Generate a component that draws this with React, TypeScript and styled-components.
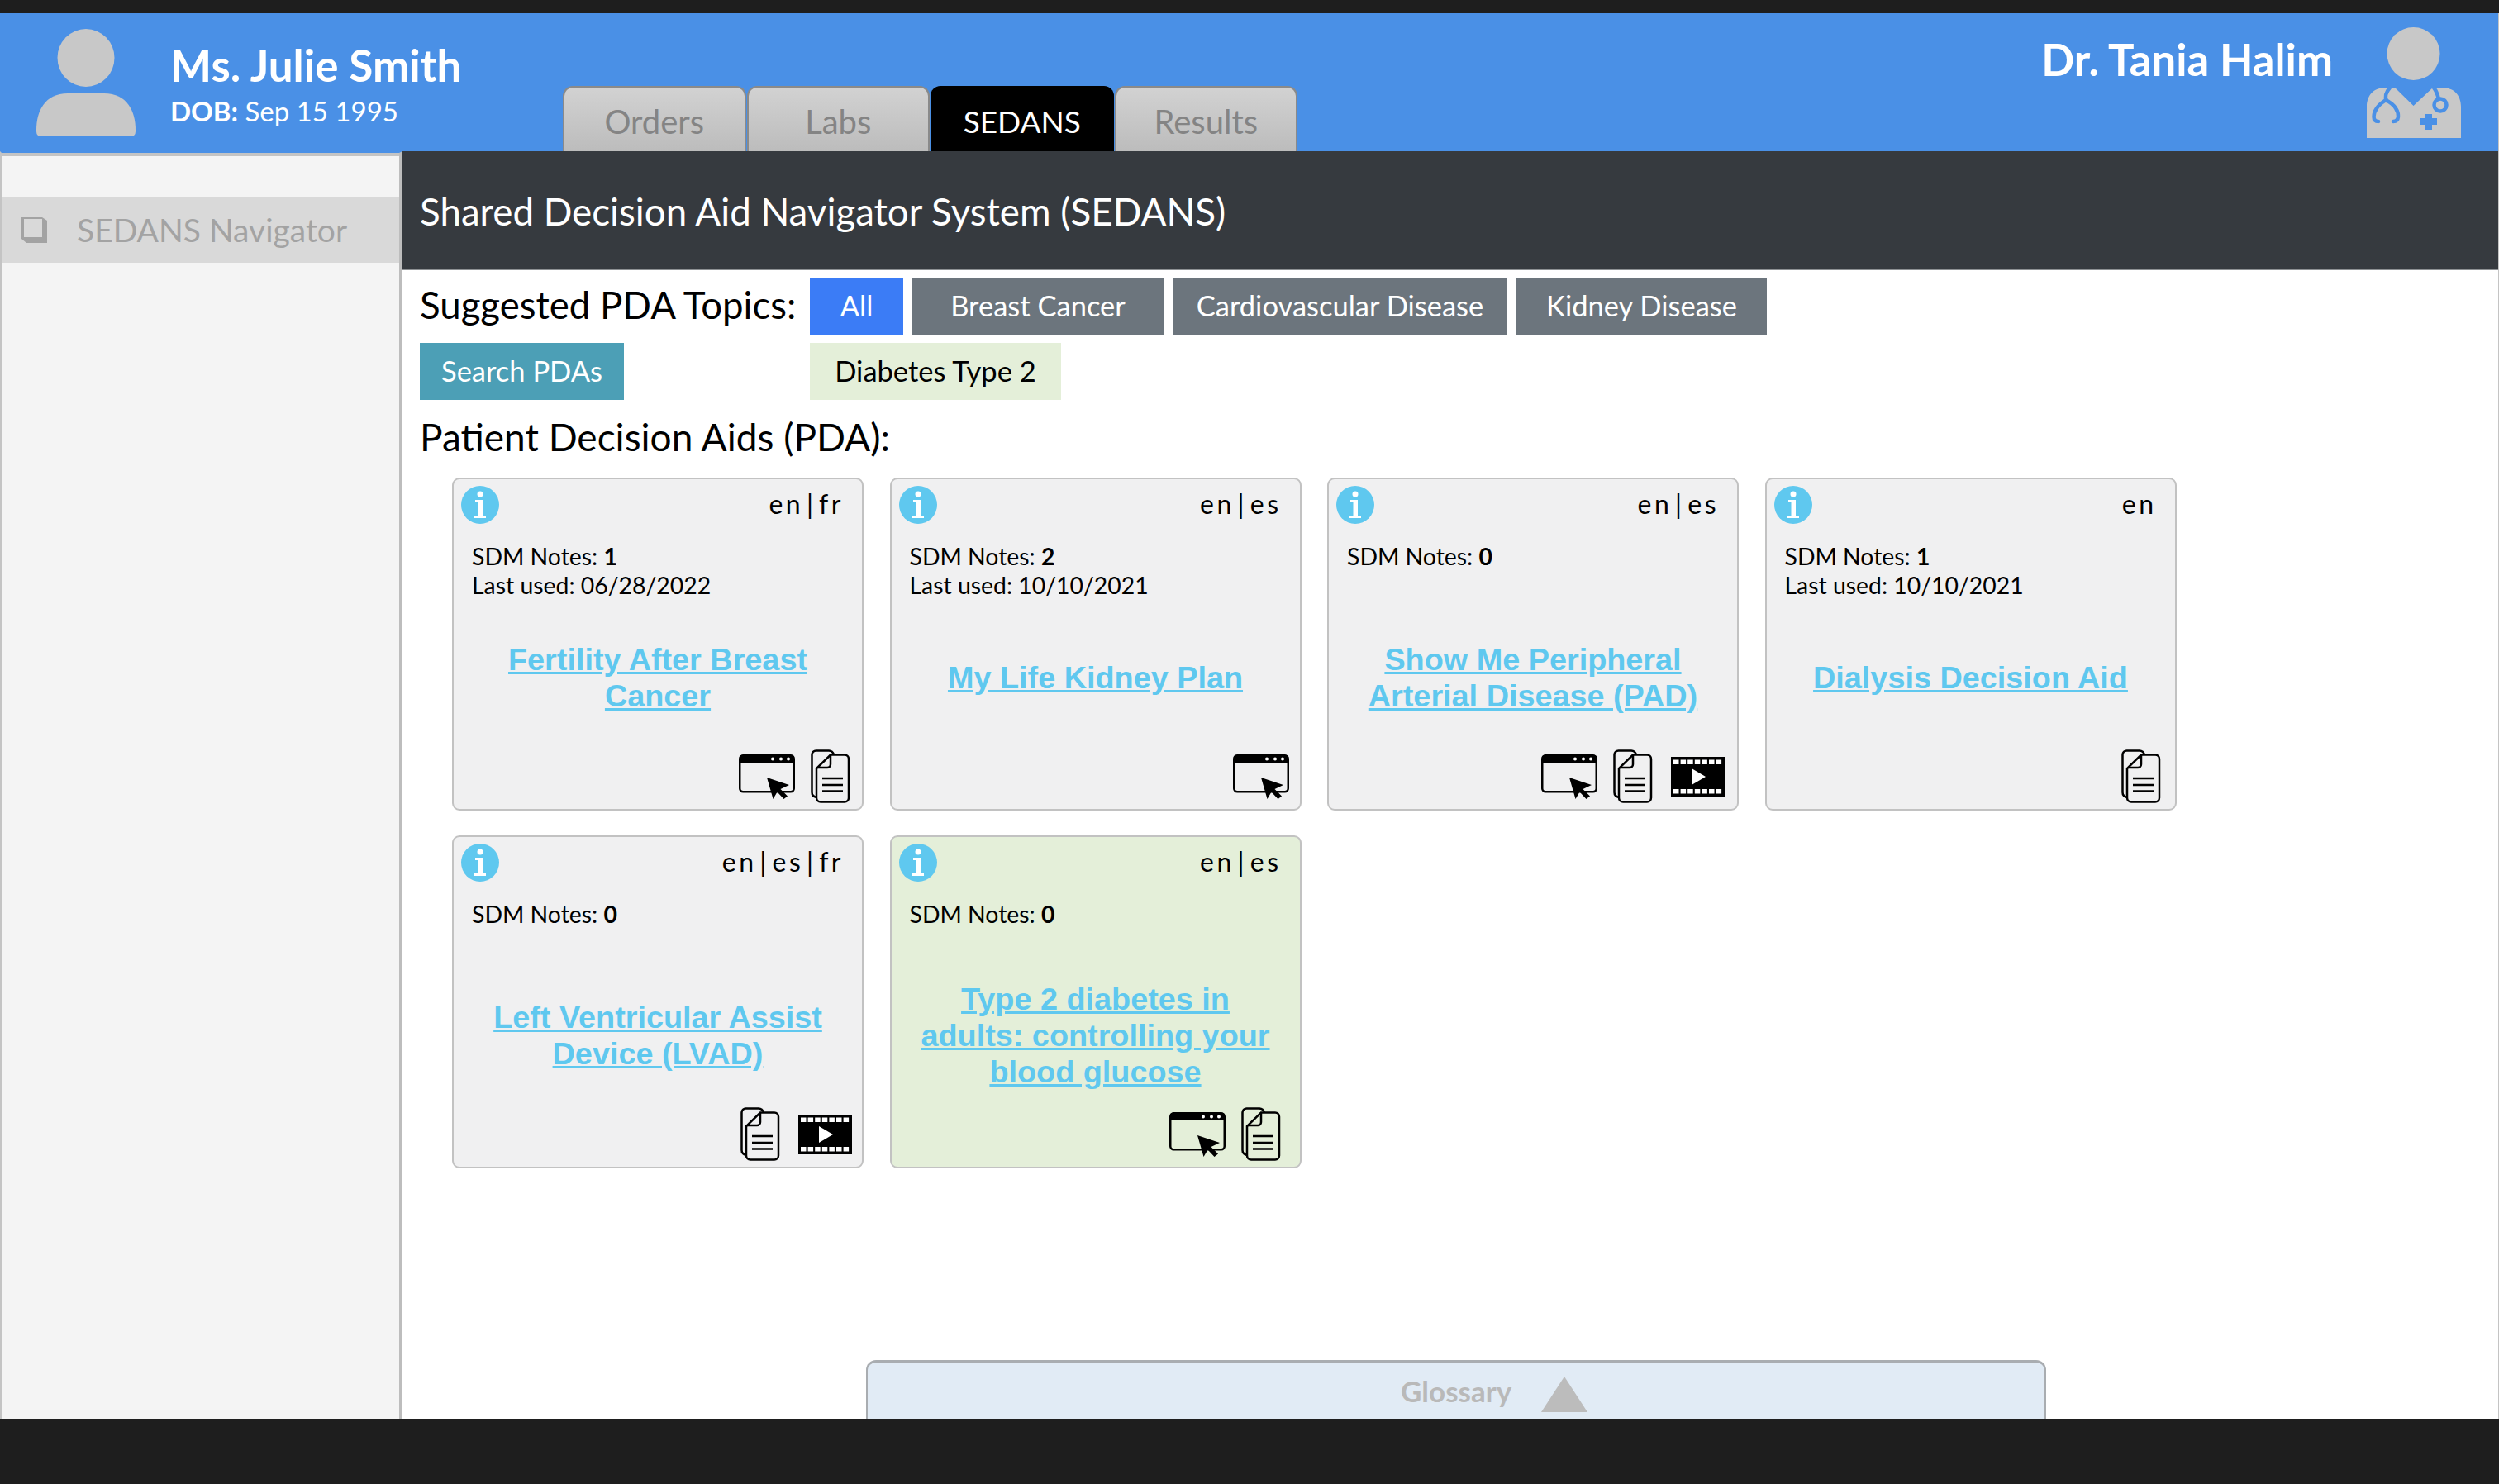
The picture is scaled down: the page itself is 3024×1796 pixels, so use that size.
import * as React from "react"
import styled, { createGlobalStyle } from "styled-components"

const GlobalStyle = createGlobalStyle`
  html, body {
    margin: 0;
    padding: 0;
    background: #1e1e1e;
    font-family: Lato, "Open Sans", sans-serif;
  }
  * { box-sizing: border-box; }
`

type Media = "web" | "doc" | "film"

interface Pda {
  title: string
  langs: string
  notes: number
  lastUsed?: string
  media: Media[]
  inset: number
  green?: boolean
}

const pdas: Pda[] = [
  { title: "Fertility After Breast Cancer", langs: "en | fr", notes: 1, lastUsed: "06/28/2022", media: ["web", "doc"], inset: 14 },
  { title: "My Life Kidney Plan", langs: "en | es", notes: 2, lastUsed: "10/10/2021", media: ["web"], inset: 13 },
  { title: "Show Me Peripheral Arterial Disease (PAD)", langs: "en | es", notes: 0, media: ["web", "doc", "film"], inset: 15 },
  { title: "Dialysis Decision Aid", langs: "en", notes: 1, lastUsed: "10/10/2021", media: ["doc"], inset: 17 },
  { title: "Left Ventricular Assist Device (LVAD)", langs: "en | es | fr", notes: 0, media: ["doc", "film"], inset: 12 },
  { title: "Type 2 diabetes in adults: controlling your blood glucose", langs: "en | es", notes: 0, media: ["web", "doc"], inset: 23, green: true },
]

const topics = [
  { name: "Breast Cancer", width: 304 },
  { name: "Cardiovascular Disease", width: 405 },
  { name: "Kidney Disease", width: 303 },
]

const PatientAvatar = () => (
  <svg width="120" height="130" viewBox="0 0 120 130" fill="#c8c8c8">
    <ellipse cx="60" cy="35" rx="34.500" ry="35" />
    <path d="M0 122 C0 100 10 78 38 78 H82 C110 78 120 100 120 122 V124 Q120 130 114 130 H6 Q0 130 0 124 Z" />
  </svg>
)

const DoctorAvatar = () => (
  <svg width="114" height="134" viewBox="0 0 114 134">
    <ellipse cx="56.500" cy="32" rx="32" ry="32" fill="#c8c8c8" />
    <path
      d="M0 134 V96 C0 82 9 73 22 73 H34 L56.500 95 L80 73 H92 C105 73 114 82 114 96 V134 Z"
      fill="#c8c8c8"
    />
    <g fill="none" stroke="#4a90e6" strokeWidth="4.500" strokeLinecap="round">
      <path d="M28 73 C22 80 22 85 24 89" />
      <path d="M14 114 C6 114 8 104 12 98 C15 93 20 90 23 88 C27 90 32 93 35 98 C39 104 40 114 32 114" />
      <path d="M81 73 C85 78 86 82 87 87" />
      <circle cx="89" cy="94" r="7.500" />
    </g>
    <path d="M70 105 H79 V110 H85 V118 H79 V124 H70 V118 H64 V110 H70 Z" fill="#4a90e6" />
  </svg>
)

const NavIcon = () => (
  <svg width="34" height="34" viewBox="0 0 34 34">
    <path d="M2 2 H27 L33 6 V33 H8 L2 28 Z" fill="#a3a3a3" />
    <rect x="5" y="4" width="22" height="22" fill="#d9d9d9" />
  </svg>
)

const InfoIcon = () => (
  <svg width="46" height="46" viewBox="0 0 46 46">
    <circle cx="23" cy="23" r="23" fill="#5fc8ef" />
    <circle cx="23" cy="10" r="3.500" fill="#fff" />
    <path d="M17 17 H26 V36 H30 V39 H16 V36 H20.500 V20 H17 Z" fill="#fff" />
  </svg>
)

const WebIcon = () => (
  <svg width="68" height="54" viewBox="0 0 68 54">
    <rect x="1.250" y="1.250" width="65.500" height="44" rx="4" fill="none" stroke="#000" strokeWidth="2.500" />
    <path d="M1 10 V5 Q1 0.500 5 0.500 H63 Q67 0.500 67 5 V10 Z" fill="#000" />
    <circle cx="41" cy="5.500" r="2" fill="#fff" />
    <circle cx="51" cy="5.500" r="2" fill="#fff" />
    <circle cx="60" cy="5.500" r="2" fill="#fff" />
    <path d="M34 28 L61 37 L50.500 42 L59 50.500 L54.500 54 L46.500 45.500 L41.500 54 Z" fill="#000" />
  </svg>
)

const DocIcon = () => (
  <svg width="48" height="65" viewBox="0 0 48 65" fill="none" stroke="#000" strokeWidth="2.500">
    <path d="M7 58 C3 57 1.500 55 1.500 52 V6.500 A5 5 0 0 1 6.500 1.500 H22 A7 7 0 0 1 28 6" />
    <path d="M24 6.500 H41 A5 5 0 0 1 46 11.500 V58.500 A5 5 0 0 1 41 63.500 H12 A5 5 0 0 1 7 58.500 V23 Z" />
    <path d="M24 6.500 V18 A4 4 0 0 1 20 22 H8" />
    <path d="M14 35 H39 M14 43 H39 M14 50.500 H39" />
  </svg>
)

const FilmIcon = () => (
  <FilmSvg width="65" height="48" viewBox="0 0 65 48">
    <rect width="65" height="48" fill="#000" />
    {[0, 1, 2, 3, 4, 5, 6].map((i) => (
      <React.Fragment key={i}>
        <rect x={3 + i * 8.6} y="3.500" width="6.500" height="5.500" fill="#fff" />
        <rect x={3 + i * 8.6} y="39" width="6.500" height="5.500" fill="#fff" />
      </React.Fragment>
    ))}
    <path d="M25 14 L42 24 L25 34 Z" fill="#fff" />
  </FilmSvg>
)

const mediaIcons = { web: WebIcon, doc: DocIcon, film: FilmIcon }

const App = () => (
  <Screen>
    <GlobalStyle />
    <Frame>
      <Header>
        <PatientAvatar />
        <PatientInfo>
          <PatientName>Ms. Julie Smith</PatientName>
          <Dob>
            <b>DOB:</b> Sep 15 1995
          </Dob>
        </PatientInfo>
        <Tabs>
          <Tab>Orders</Tab>
          <Tab>Labs</Tab>
          <Tab $active>SEDANS</Tab>
          <Tab>Results</Tab>
        </Tabs>
        <Doctor>
          <DoctorName>Dr. Tania Halim</DoctorName>
          <DoctorAvatar />
        </Doctor>
      </Header>

      <Body>
        <Sidebar>
          <NavItem>
            <NavIcon />
            SEDANS Navigator
          </NavItem>
        </Sidebar>

        <Content>
          <TitleBar>Shared Decision Aid Navigator System (SEDANS)</TitleBar>

          <TopicGrid>
            <TopicsHeading>Suggested PDA Topics:</TopicsHeading>
            <TopicRow>
              <Chip $bg="#3b7cf6" $width={113}>All</Chip>
              {topics.map((t) => (
                <Chip key={t.name} $bg="#6c757d" $width={t.width}>{t.name}</Chip>
              ))}
            </TopicRow>
            <SearchButton>Search PDAs</SearchButton>
            <TopicRow>
              <Chip $bg="#e4efd9" $color="#000" $width={304}>Diabetes Type 2</Chip>
            </TopicRow>
          </TopicGrid>

          <SectionHeading>Patient Decision Aids (PDA):</SectionHeading>

          <CardGrid>
            {pdas.map((p) => (
              <Card key={p.title} $green={p.green}>
                <CardTop>
                  <InfoIcon />
                  <Langs>{p.langs}</Langs>
                </CardTop>
                <Notes>
                  SDM Notes: <b>{p.notes}</b>
                  {p.lastUsed && (
                    <>
                      <br />
                      Last used: {p.lastUsed}
                    </>
                  )}
                </Notes>
                <CardTitle>
                  <a href="#">{p.title}</a>
                </CardTitle>
                <MediaRow $inset={p.inset}>
                  {p.media.map((m) => {
                    const Icon = mediaIcons[m]
                    return <Icon key={m} />
                  })}
                </MediaRow>
              </Card>
            ))}
          </CardGrid>

          <Glossary>
            <GlossaryLabel>Glossary</GlossaryLabel>
            <GlossaryArrow />
          </Glossary>
        </Content>
      </Body>
    </Frame>
  </Screen>
)

export default App

// Styles
const FilmSvg = styled.svg`
  margin-left: 3px;
`

const Screen = styled.div`
  width: 3024px;
  height: 1796px;
  padding: 16px 0 79px;
  background: #1e1e1e;
  overflow: hidden;
`

const Frame = styled.div`
  height: 100%;
  display: flex;
  flex-direction: column;
  background: #fff;
  border-right: 1px solid #c4c4c4;
  overflow: hidden;
`

const Header = styled.header`
  height: 167px;
  flex: none;
  display: flex;
  background: #4a90e6;
  padding: 19px 45px 0 44px;
`

const PatientInfo = styled.div`
  width: 475px;
  margin-left: 42px;
  padding-top: 14px;
  color: #fff;
`

const PatientName = styled.div`
  font-size: 53px;
  font-weight: 700;
  line-height: 60px;
`

const Dob = styled.div`
  font-size: 33px;
  line-height: 44px;
  margin-top: 3px;
`

const Tabs = styled.nav`
  display: flex;
  gap: 1px;
  align-self: flex-end;
`

const Tab = styled.div<{ $active?: boolean }>`
  width: 221.500px;
  height: 79px;
  display: flex;
  align-items: center;
  justify-content: center;
  padding-top: 4px;
  font-size: ${(p) => (p.$active ? "37px" : "40px")};
  border: 2px solid ${(p) => (p.$active ? "#000" : "#8a8a8a")};
  border-bottom: none;
  border-radius: 12px 12px 0 0;
  color: ${(p) => (p.$active ? "#fff" : "#848484")};
  background: ${(p) =>
    p.$active ? "#000" : "linear-gradient(#d2d2d2, #bcbcbc)"};
`

const Doctor = styled.div`
  margin-left: auto;
  display: flex;
  align-items: flex-start;
  gap: 41px;
  margin-top: -2px;
`

const DoctorName = styled.div`
  font-size: 52.600px;
  font-weight: 700;
  line-height: 60px;
  color: #fff;
  padding-top: 9px;
`

const Body = styled.div`
  flex: 1;
  min-height: 0;
  display: flex;
`

const Sidebar = styled.aside`
  width: 487px;
  flex: none;
  padding-top: 53px;
  background: #f4f4f4;
  border-left: 2px solid #c4c4c4;
  border-right: 4px solid #bdbdbd;
  border-top: 2px solid #4a90e6;
  box-shadow: inset 0 4px 0 #c4c4c4;
`

const NavItem = styled.div`
  height: 80px;
  display: flex;
  align-items: center;
  gap: 35px;
  padding-left: 22px;
  background: #d9d9d9;
  color: #a3a3a3;
  font-size: 39px;
`

const Content = styled.main`
  flex: 1;
  min-width: 0;
  display: flex;
  flex-direction: column;
`

const TitleBar = styled.div`
  height: 144px;
  flex: none;
  display: flex;
  align-items: center;
  padding: 2px 0 0 21px;
  background: #363a3f;
  border-bottom: 2px solid #8d9093;
  color: #fff;
  font-size: 45.700px;
`

const TopicGrid = styled.div`
  display: grid;
  grid-template-columns: 472px 1fr;
  row-gap: 10px;
  padding: 9px 0 0 21px;
`

const Heading = styled.div`
  font-size: 46px;
  line-height: 69px;
  color: #000;
`

const TopicsHeading = styled(Heading)`
  font-size: 45.600px;
  line-height: 65px;
`

const TopicRow = styled.div`
  display: flex;
  gap: 11px;
`

const Chip = styled.div<{ $bg: string; $color?: string; $width: number }>`
  height: 69px;
  width: ${(p) => p.$width}px;
  display: flex;
  align-items: center;
  justify-content: center;
  padding-bottom: 2px;
  white-space: nowrap;
  background: ${(p) => p.$bg};
  color: ${(p) => p.$color ?? "#fff"};
  font-size: 34.500px;
`

const SearchButton = styled.div`
  width: 247px;
  height: 69px;
  display: flex;
  align-items: center;
  justify-content: center;
  padding-bottom: 2px;
  background: #4c9fb6;
  color: #fff;
  font-size: 34.500px;
`

const SectionHeading = styled(Heading)`
  padding: 10px 0 0 21px;
`

const CardGrid = styled.div`
  display: grid;
  grid-template-columns: repeat(4, 498px);
  gap: 30px 31.500px;
  padding: 15px 0 0 60px;
`

const Card = styled.article<{ $green?: boolean }>`
  height: 403px;
  display: flex;
  flex-direction: column;
  border: 2px solid #c2c2c2;
  border-radius: 9px;
  background: ${(p) => (p.$green ? "#e4efd9" : "#f0f0f1")};
  color: #000;
`

const CardTop = styled.div`
  height: 60px;
  flex: none;
  display: flex;
  justify-content: space-between;
  padding: 8px 22px 0 9px;
`

const Langs = styled.div`
  font-size: 32px;
  line-height: 44px;
  letter-spacing: 3.500px;
  word-spacing: -8px;
`

const Notes = styled.div`
  height: 97px;
  flex: none;
  padding: 16px 0 0 22px;
  font-size: 28.400px;
  line-height: 35px;
`

const CardTitle = styled.div`
  height: 165px;
  flex: none;
  display: flex;
  align-items: center;
  justify-content: center;
  padding: 0 26px;
  text-align: center;
  font-family: "Liberation Sans", Arial, sans-serif;
  font-weight: 700;
  font-size: 37.800px;
  line-height: 44px;

  a {
    color: #5fc8ef;
  }
`

const MediaRow = styled.div<{ $inset: number }>`
  flex: 1;
  display: flex;
  align-items: center;
  justify-content: flex-end;
  gap: 19px;
  padding: 0 ${(p) => p.$inset}px 2px 0;
`

const Glossary = styled.div`
  margin: auto 0 0 561px;
  width: 1428px;
  height: 71px;
  flex: none;
  display: flex;
  align-items: flex-start;
  gap: 36px;
  padding: 17px 0 0 645px;
  background: #e1ebf5;
  border: 2px solid #a9adb1;
  border-top-width: 3px;
  border-bottom: none;
  border-radius: 12px 12px 0 0;
`

const GlossaryLabel = styled.div`
  font-size: 35px;
  line-height: 34px;
  font-weight: 700;
  color: #b9b9b9;
`

const GlossaryArrow = styled.div`
  width: 0;
  height: 0;
  border-left: 28px solid transparent;
  border-right: 28px solid transparent;
  border-bottom: 43px solid #bcbcbc;
`
